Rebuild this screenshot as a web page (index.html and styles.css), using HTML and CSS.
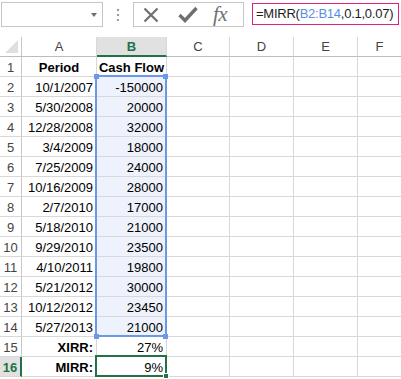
FILE: index.html
```html
<!DOCTYPE html>
<html>
<head>
<meta charset="utf-8">
<link rel="stylesheet" href="styles.css">
</head>
<body>
<div class="app">
  <div class="toolbar">
    <div class="namebox"><span class="caret"></span></div>
    <div class="grip"><i></i><i></i><i></i></div>
    <div class="fxbox">
      <svg class="ico-x" width="16" height="16" viewBox="0 0 16 16"><path d="M1.5 1.5 L14.5 14.5 M14.5 1.5 L1.5 14.5" stroke="#6f6f6f" stroke-width="2.2" fill="none"/></svg>
      <svg class="ico-check" width="20" height="17" viewBox="0 0 20 17"><path d="M1.5 9 L7 14.5 L18.5 2" stroke="#6f6f6f" stroke-width="3.4" fill="none" stroke-linejoin="miter"/></svg>
      <span class="fx">fx</span>
    </div>
    <div class="formula">=MIRR(<span class="ref">B2:B14</span>,0.1,0.07)</div>
  </div>
  <div class="sheet">
    <div class="row hdr">
      <div class="c rh corner"><span class="tri"></span></div>
      <div class="c ca">A</div>
      <div class="c cb sel">B</div>
      <div class="c cc">C</div>
      <div class="c cd">D</div>
      <div class="c ce">E</div>
      <div class="c cf">F</div>
    </div>
    <div class="row"><div class="c rh">1</div><div class="c ca b ctr">Period</div><div class="c cb b ctr">Cash Flow</div><div class="c cc"></div><div class="c cd"></div><div class="c ce"></div><div class="c cf"></div></div>
    <div class="row"><div class="c rh">2</div><div class="c ca">10/1/2007</div><div class="c cb rng">-150000</div><div class="c cc"></div><div class="c cd"></div><div class="c ce"></div><div class="c cf"></div></div>
    <div class="row"><div class="c rh">3</div><div class="c ca">5/30/2008</div><div class="c cb rng">20000</div><div class="c cc"></div><div class="c cd"></div><div class="c ce"></div><div class="c cf"></div></div>
    <div class="row"><div class="c rh">4</div><div class="c ca">12/28/2008</div><div class="c cb rng">32000</div><div class="c cc"></div><div class="c cd"></div><div class="c ce"></div><div class="c cf"></div></div>
    <div class="row"><div class="c rh">5</div><div class="c ca">3/4/2009</div><div class="c cb rng">18000</div><div class="c cc"></div><div class="c cd"></div><div class="c ce"></div><div class="c cf"></div></div>
    <div class="row"><div class="c rh">6</div><div class="c ca">7/25/2009</div><div class="c cb rng">24000</div><div class="c cc"></div><div class="c cd"></div><div class="c ce"></div><div class="c cf"></div></div>
    <div class="row"><div class="c rh">7</div><div class="c ca">10/16/2009</div><div class="c cb rng">28000</div><div class="c cc"></div><div class="c cd"></div><div class="c ce"></div><div class="c cf"></div></div>
    <div class="row"><div class="c rh">8</div><div class="c ca">2/7/2010</div><div class="c cb rng">17000</div><div class="c cc"></div><div class="c cd"></div><div class="c ce"></div><div class="c cf"></div></div>
    <div class="row"><div class="c rh">9</div><div class="c ca">5/18/2010</div><div class="c cb rng">21000</div><div class="c cc"></div><div class="c cd"></div><div class="c ce"></div><div class="c cf"></div></div>
    <div class="row"><div class="c rh">10</div><div class="c ca">9/29/2010</div><div class="c cb rng">23500</div><div class="c cc"></div><div class="c cd"></div><div class="c ce"></div><div class="c cf"></div></div>
    <div class="row"><div class="c rh">11</div><div class="c ca">4/10/2011</div><div class="c cb rng">19800</div><div class="c cc"></div><div class="c cd"></div><div class="c ce"></div><div class="c cf"></div></div>
    <div class="row"><div class="c rh">12</div><div class="c ca">5/21/2012</div><div class="c cb rng">30000</div><div class="c cc"></div><div class="c cd"></div><div class="c ce"></div><div class="c cf"></div></div>
    <div class="row"><div class="c rh">13</div><div class="c ca">10/12/2012</div><div class="c cb rng">23450</div><div class="c cc"></div><div class="c cd"></div><div class="c ce"></div><div class="c cf"></div></div>
    <div class="row"><div class="c rh">14</div><div class="c ca">5/27/2013</div><div class="c cb rng">21000</div><div class="c cc"></div><div class="c cd"></div><div class="c ce"></div><div class="c cf"></div></div>
    <div class="row"><div class="c rh">15</div><div class="c ca b">XIRR:</div><div class="c cb">27%</div><div class="c cc"></div><div class="c cd"></div><div class="c ce"></div><div class="c cf"></div></div>
    <div class="row"><div class="c rh selrow">16</div><div class="c ca b">MIRR:</div><div class="c cb">9%</div><div class="c cc"></div><div class="c cd"></div><div class="c ce"></div><div class="c cf"></div></div>

    <div class="range"></div>
    <span class="hdl h-tl"></span><span class="hdl h-tr"></span><span class="hdl h-bl"></span><span class="hdl h-br"></span>
    <div class="active"><span class="fill"></span></div>
  </div>
</div>
</body>
</html>
```

FILE: styles.css
```css
* { box-sizing: border-box; }
html, body { margin: 0; padding: 0; background: #fff; }
body { font-family: "Liberation Sans", Arial, sans-serif; width: 401px; height: 379px; overflow: hidden; }
.app { width: 401px; }

.toolbar { height: 37px; display: flex; align-items: flex-start; padding-top: 2px; padding-left: 1px; }
.namebox { width: 102px; height: 25px; border: 1px solid #c6c6c6; position: relative; }
.caret { position: absolute; right: 5px; top: 10px; width: 0; height: 0; border-left: 3.5px solid transparent; border-right: 3.5px solid transparent; border-top: 4px solid #6d6d6d; }
.grip { width: 30px; height: 25px; display: flex; flex-direction: column; align-items: center; justify-content: center; gap: 3px; }
.grip i { display: block; width: 2px; height: 2px; background: #9a9a9a; }
.fxbox { width: 111px; height: 25px; border: 1px solid #c6c6c6; display: flex; align-items: center; padding-left: 9px; }
.ico-check { margin-left: 19px; }
.fx { margin-left: 15px; font-family: "Liberation Serif", serif; font-style: italic; font-size: 21px; color: #707070; line-height: 20px; letter-spacing: -0.5px; margin-top: -2px; }
.formula { margin-left: 8px; margin-top: 1px; width: 147px; height: 22px; border: 1.5px solid #e0237f; font-size: 13px; letter-spacing: -0.25px; line-height: 19px; padding-left: 3px; color: #1d1d1d; white-space: nowrap; }
.formula .ref { color: #5a8de2; }

.sheet { position: relative; font-size: 13px; }
.row { display: flex; height: 20px; }
.c { height: 20px; border-right: 1px solid #d8d8d8; border-bottom: 1px solid #d8d8d8; line-height: 19px; padding-top: 1px; padding-right: 3px; text-align: right; white-space: nowrap; color: #000; flex: none; }
.rh { width: 22px; text-align: center; padding: 1px 0 0 0; color: #444; border-right-color: #c8c8c8; }
.ca { width: 75px; }
.cb { width: 70px; }
.cc { width: 63px; }
.cd { width: 64px; }
.ce { width: 64px; }
.cf { flex: 1; border-right: none; }
.b { font-weight: bold; }
.ctr { text-align: center; padding-right: 0; }

.hdr .c { text-align: center; color: #444; padding: 0; line-height: 20px; border-bottom-color: #bcbcbc; }
.hdr .sel { background: #e1e1e1; color: #217346; font-weight: bold; border-bottom: 2px solid #217346; line-height: 19px; }
.corner { position: relative; }
.tri { position: absolute; right: 3px; bottom: 3px; width: 0; height: 0; border-left: 13px solid transparent; border-bottom: 13px solid #dfdfdf; }
.selrow { background: #e1e1e1; color: #217346 !important; font-weight: bold; border-right: 2px solid #217346 !important; }

.rng { background: #edf2fc; }

.range { position: absolute; left: 95px; top: 38px; width: 72px; height: 262px; border: 2px solid #6b98e8; }
.hdl { position: absolute; width: 5px; height: 5px; background: #6b98e8; }
.h-tl { left: 94px; top: 37px; }
.h-tr { left: 163px; top: 37px; }
.h-bl { left: 94px; top: 297px; }
.h-br { left: 163px; top: 297px; }

.active { position: absolute; left: 95px; top: 318px; width: 72px; height: 22px; border: 2px solid #217346; }
.fill { position: absolute; right: -4px; bottom: -4px; width: 6px; height: 6px; background: #217346; border: 1px solid #fff; }
```
